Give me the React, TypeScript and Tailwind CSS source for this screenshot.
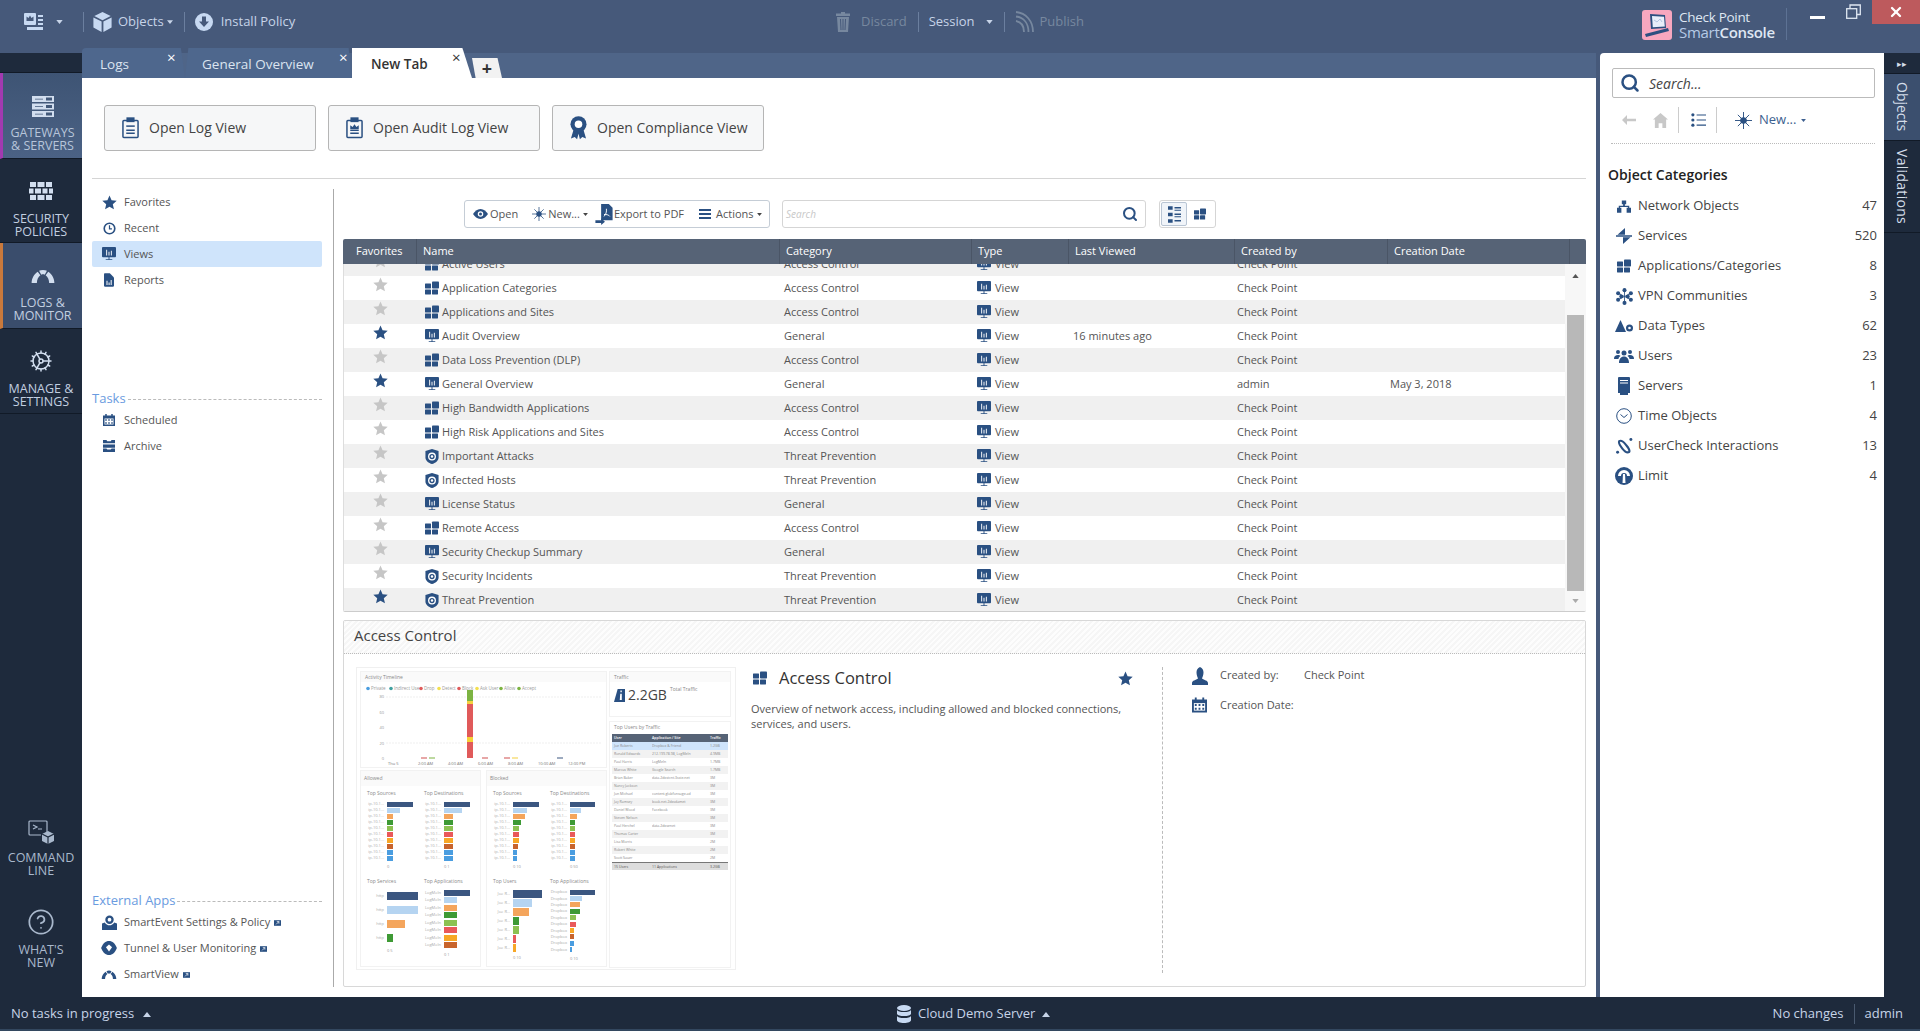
import { Search, Cog, CircleHelp, X } from "lucide-react";

type IconProps = { className?: string };

// hand drawn glyphs, all use currentColor
function Star({ className }: IconProps) {
  return (
    <svg viewBox="0 0 24 24" className={className} fill="currentColor">
      <path d="M12 .8l3.3 7.6 8.2.8-6.2 5.5 1.8 8.1L12 18.600l-7.100 4.200 1.800-8.100L.5 9.200l8.200-.8z" />
    </svg>
  );
}

function Caret({ className }: IconProps) {
  return (
    <svg viewBox="0 0 8 5" className={className} fill="currentColor">
      <path d="M0 0h8L4 5z" />
    </svg>
  );
}

function CaretUp({ className }: IconProps) {
  return (
    <svg viewBox="0 0 8 5" className={className} fill="currentColor">
      <path d="M0 5h8L4 0z" />
    </svg>
  );
}

function AppsIcon({ className }: IconProps) {
  return (
    <svg viewBox="0 0 14 14" className={className} fill="currentColor">
      <rect x="0" y="2.500" width="6" height="5" rx="0.400" />
      <rect x="7" y="0.500" width="7" height="7" rx="0.800" />
      <rect x="0" y="8.500" width="6" height="5" rx="0.400" />
      <rect x="7" y="8.500" width="6" height="5" rx="0.400" />
    </svg>
  );
}

function ViewIcon({ className }: IconProps) {
  return (
    <svg viewBox="0 0 15 15" className={className} fill="currentColor">
      <path d="M1 0h13a1 1 0 011 1v9a1 1 0 01-1 1H8v2h3v1H4v-1h3v-2H1a1 1 0 01-1-1V1a1 1 0 011-1z" />
      <path d="M4.500 3h1v6h-1zM7 5h1v4H7zM9.500 4h1v5h-1z" fill="#fff" />
    </svg>
  );
}

function ShieldIcon({ className }: IconProps) {
  return (
    <svg viewBox="0 0 14 16" className={className} fill="currentColor">
      <path d="M7 0l7 2v7c0 3.500-3.500 6-7 7-3.500-1-7-3.500-7-7V2z" />
      <circle cx="7" cy="8" r="4.200" fill="#fff" />
      <circle cx="7" cy="8" r="2.800" />
      <circle cx="7" cy="8" r="1.300" fill="#fff" />
    </svg>
  );
}

function ClipIcon({ className, crown }: IconProps & { crown?: boolean }) {
  return (
    <svg viewBox="0 0 18 22" className={className} fill="none" stroke="currentColor" strokeWidth="1.600">
      <rect x="1" y="3" width="16" height="18" rx="1" />
      <rect x="5.500" y="0.500" width="7" height="3.500" fill="currentColor" />
      {crown ? (
        <path d="M4.500 8l2.500 2 2-3 2 3 2.500-2v4h-9z" fill="currentColor" stroke="none" />
      ) : (
        <path d="M4.500 9h9" />
      )}
      <path d="M4.500 13.500h9M4.500 16.500h9" />
    </svg>
  );
}

function RibbonIcon({ className }: IconProps) {
  return (
    <svg viewBox="0 0 18 26" className={className} fill="currentColor">
      <path d="M4 14l-3 10 4-1.500L7.500 25 9 19l1.500 6 2.500-2.500 4 1.500-3-10z" />
      <circle cx="9" cy="9" r="8.500" />
      <circle cx="9" cy="9" r="4" fill="#fff" />
    </svg>
  );
}

function ClockIcon({ className }: IconProps) {
  return (
    <svg viewBox="0 0 16 16" className={className} fill="none" stroke="currentColor" strokeWidth="2">
      <circle cx="8" cy="8" r="6.500" />
      <path d="M8 4v4.500h3" strokeWidth="1.500" />
    </svg>
  );
}

function ReportIcon({ className }: IconProps) {
  return (
    <svg viewBox="0 0 12 16" className={className} fill="currentColor">
      <path d="M0 1a1 1 0 011-1h6l5 5v10a1 1 0 01-1 1H1a1 1 0 01-1-1z" />
      <path d="M3 9h1.200v5H3zM5.500 11h1.200v3H5.500zM8 8h1.200v6H8z" fill="#fff" />
    </svg>
  );
}

function CalendarIcon({ className }: IconProps) {
  return (
    <svg viewBox="0 0 16 16" className={className} fill="currentColor">
      <path d="M3 0h2v2h6V0h2v2h3v14H0V2h3z" />
      <path d="M2 6h12v8H2z" fill="#fff" />
      <path d="M3 7h2v2H3zM7 7h2v2H7zM11 7h2v2h-2zM3 11h2v2H3zM7 11h2v2H7zM11 11h2v2h-2z" />
    </svg>
  );
}

function ArchiveIcon({ className }: IconProps) {
  return (
    <svg viewBox="0 0 14 14" className={className} fill="currentColor">
      <path d="M0 0h4l1 1.500h4L10 0h4v4H0zM0 5h14v4H0zM0 10h4l1 1h4l1-1h4v4H0z" />
      <path d="M0 4h14v1H0z" fill="#fff" />
    </svg>
  );
}

function SmartEventIcon({ className }: IconProps) {
  return (
    <svg viewBox="0 0 16 16" className={className} fill="currentColor">
      <path d="M0 9l3-1c1 2 3 3 5 3s4-1 5-3l3 1v7H0z" />
      <circle cx="8" cy="5" r="4.500" />
      <circle cx="8" cy="5" r="2" fill="#fff" />
    </svg>
  );
}

function TunnelIcon({ className }: IconProps) {
  return (
    <svg viewBox="0 0 18 16" className={className} fill="currentColor">
      <path d="M9 0c4 0 7 3 9 8-2 5-5 8-9 8s-7-3-9-8c2-5 5-8 9-8z" />
      <path d="M9 4l3.500 3L9 12 5.500 7z" fill="#fff" />
    </svg>
  );
}

function GaugeIcon({ className }: IconProps) {
  return (
    <svg viewBox="0 0 26 16" className={className} fill="currentColor">
      <path d="M0 16C0 11 2.500 6 7 3l3 4c-2.500 2-4 5-4 9zM8.500 2c1.300-.6 2.800-1 4.500-1v0c1.700 0 3.200.4 4.500 1l-2.500 4.500C14.400 6.200 13.700 6 13 6s-1.400.2-2 .5zM19 3c4.500 3 7 8 7 13h-6c0-4-1.500-7-4-9z" />
    </svg>
  );
}

function ExternalIcon({ className }: IconProps) {
  return (
    <svg viewBox="0 0 10 8" className={className}>
      <rect width="10" height="8" fill="currentColor" />
      <path d="M3 6l4-4M4 2h3v3" stroke="#fff" strokeWidth="1" fill="none" />
    </svg>
  );
}

function Spark({ className }: IconProps) {
  return (
    <svg viewBox="0 0 18 18" className={className} stroke="currentColor" strokeWidth="1" fill="currentColor">
      <path d="M9 0v18M0 9h18M3 3l12 12M15 3L3 15" />
      <circle cx="9" cy="9" r="3.500" stroke="none" />
    </svg>
  );
}

function EyeIcon({ className }: IconProps) {
  return (
    <svg viewBox="0 0 18 12" className={className} fill="currentColor">
      <path d="M9 0c4 0 7 3 9 6-2 3-5 6-9 6s-7-3-9-6c2-3 5-6 9-6z" />
      <circle cx="9" cy="6" r="3.300" fill="#fff" />
      <circle cx="9" cy="6" r="1.800" />
    </svg>
  );
}

function PdfIcon({ className }: IconProps) {
  return (
    <svg viewBox="0 0 18 22" className={className} fill="currentColor">
      <path d="M6 0h8l4 4v13H6z" />
      <path d="M9 13c2-2 3-5 2.500-8M9 11c2 0 5 0 6 2" stroke="#fff" fill="none" />
      <path d="M0 17h6v-2l4 3.500-4 3.500v-2H0z" />
    </svg>
  );
}

function BarsIcon({ className }: IconProps) {
  return (
    <svg viewBox="0 0 12 10" className={className} fill="currentColor">
      <path d="M0 0h12v2H0zM0 4h12v2H0zM0 8h12v2H0z" />
    </svg>
  );
}

function DetailsIcon({ className }: IconProps) {
  return (
    <svg viewBox="0 0 14 18" className={className} fill="currentColor">
      <path d="M0 0h5v4H0zM0 7h5v4H0zM0 14h5v4H0zM7 1h7v1.500H7zM7 8h7v1.500H7zM7 15h7v1.500H7zM7 4h7v1H7zM7 11h7v1H7z" />
    </svg>
  );
}

function ListDots({ className }: IconProps) {
  return (
    <svg viewBox="0 0 16 16" className={className} fill="currentColor">
      <circle cx="2" cy="2.500" r="1.700" />
      <circle cx="2" cy="8" r="1.700" />
      <circle cx="2" cy="13.500" r="1.700" />
      <path d="M6 2h10v1.200H6zM6 7.400h10v1.200H6zM6 12.800h10V14H6z" />
    </svg>
  );
}

function House({ className }: IconProps) {
  return (
    <svg viewBox="0 0 16 16" className={className} fill="currentColor">
      <path d="M8 0l8 7h-2v9h-4v-5H6v5H2V7H0z" />
    </svg>
  );
}

function BackArrow({ className }: IconProps) {
  return (
    <svg viewBox="0 0 14 10" className={className} fill="currentColor">
      <path d="M5 0v3.800h9v2.400H5V10L0 5z" />
    </svg>
  );
}

function PersonIcon({ className }: IconProps) {
  return (
    <svg viewBox="0 0 16 18" className={className} fill="currentColor">
      <path d="M8 0c2.500 1 3.500 3 3.500 5.500S10.500 10 10 11.500c2 1.500 6 2 6 4.500v2H0v-2c0-2.500 4-3 6-4.500C5.500 10 4.500 8 4.500 5.500S5.500 1 8 0z" />
    </svg>
  );
}

function ServerStack({ className }: IconProps) {
  return (
    <svg viewBox="0 0 22 21" className={className} fill="currentColor">
      <path d="M0 0h22v6H0zM0 7.500h22v6H0zM0 15h22v6H0z" />
      <path d="M14 1.500h6v3h-6zM14 9h6v3h-6zM14 16.500h6v3h-6z" fill="#425879" />
      <path d="M3 2.700h8v.8H3zM3 10.200h8v.8H3zM3 17.700h8v.8H3z" fill="#425879" />
    </svg>
  );
}

function Bricks({ className }: IconProps) {
  return (
    <svg viewBox="0 0 24 18" className={className} fill="currentColor">
      <path d="M1 0h6v5H1zM8.500 0h7v5h-7zM17 0h6v5h-6zM0 6.500h4.500v5H0zM6 6.500h6v5H6zM13.500 6.500h5v5h-5zM20 6.500h4v5h-4zM1 13h6v5H1zM8.500 13h7v5h-7zM17 13h6v5h-6z" />
    </svg>
  );
}

function ConsoleIcon({ className }: IconProps) {
  return (
    <svg viewBox="0 0 26 24" className={className} fill="none" stroke="currentColor" strokeWidth="1.200">
      <path d="M19 15V2a1 1 0 00-1-1H2a1 1 0 00-1 1v12a1 1 0 001 1h11" />
      <path d="M5 5l4 2-4 2M10 9h4" />
      <path d="M20 11l6 3v7l-6 3-6-3v-7z" fill="currentColor" stroke="none" />
      <path d="M14 14l6 3 6-3M20 17v7" stroke="#1e2a3c" />
    </svg>
  );
}

function DeskIcon({ className }: IconProps) {
  return (
    <svg viewBox="0 0 20 18" className={className} fill="currentColor">
      <rect x="0" y="0" width="12" height="12" rx="1" />
      <path d="M2.500 8V3.500l2 1.500L6 2.500 7.500 5l2-1.500V8z" fill="#46597a" />
      <path d="M14 2h5v2h-5zM14 6h5v2h-5zM14 10h5v2h-5zM3 14h16v3H3z" />
    </svg>
  );
}

function CubeIcon({ className }: IconProps) {
  return (
    <svg viewBox="0 0 20 22" className={className} fill="currentColor">
      <path d="M10 0l9 4.500-9 4.500-9-4.500z" />
      <path d="M0 6l9 4.500V22l-9-5zM20 6l-9 4.500V22l9-5z" />
    </svg>
  );
}

function InstallIcon({ className }: IconProps) {
  return (
    <svg viewBox="0 0 18 18" className={className}>
      <circle cx="9" cy="9" r="9" fill="currentColor" />
      <path d="M7 3.500h4v5h3L9 14 4 8.500h3z" fill="#46597a" />
    </svg>
  );
}

function TrashIcon({ className }: IconProps) {
  return (
    <svg viewBox="0 0 14 20" className={className} fill="currentColor">
      <path d="M5 0h4v1.500h5V4H0V1.500h5z" />
      <path d="M1 5h12l-1 15H2zM4 7l.500 11h1L5 7zM6.500 7v11h1V7zM9 7l-.500 11h1L10 7z" fillRule="evenodd" />
    </svg>
  );
}

function PublishIcon({ className }: IconProps) {
  return (
    <svg viewBox="0 0 20 22" className={className} fill="none" stroke="currentColor" strokeWidth="1.800">
      <path d="M1 10c5 1 8 5 8 11M1 5.500c8 1 12.500 7 12.500 15.500M1 1c10 1 17 9 17 20" />
    </svg>
  );
}

function DbIcon({ className }: IconProps) {
  return (
    <svg viewBox="0 0 14 18" className={className} fill="currentColor">
      <ellipse cx="7" cy="3" rx="7" ry="3" />
      <path d="M0 5c1 1.500 3 2 7 2s6-.5 7-2v4c-1 1.500-3 2-7 2S1 10.500 0 9zM0 11c1 1.500 3 2 7 2s6-.5 7-2v4c0 2-3 3-7 3s-7-1-7-3z" />
    </svg>
  );
}

function LogoIcon({ className }: IconProps) {
  return (
    <svg viewBox="0 0 30 30" className={className}>
      <rect width="30" height="30" rx="3" fill="#f7a7bf" />
      <path d="M8 4l15 1 1 13-15 1z" fill="#2c4f80" />
      <path d="M10 6l12 .800.800 9.700-12 .800z" fill="#e8eefa" />
      <path d="M3 24l23-6 1 3-23 6z" fill="#2c4f80" />
      <path d="M12 10l3 2 3-3 2 3" stroke="#9db4d6" fill="none" strokeWidth="0.700" />
    </svg>
  );
}

function NetworkIcon({ className }: IconProps) {
  return (
    <svg viewBox="0 0 16 14" className={className} fill="currentColor">
      <path d="M5.500 0h5v4.500H9V6h5v2.500h2V14h-5V8.500h1.500v-1h-9v1H5V14H0V8.500h2V6h5V4.500H5.500z" />
    </svg>
  );
}

function ServicesIcon({ className }: IconProps) {
  return (
    <svg viewBox="0 0 16 16" className={className} fill="currentColor">
      <path d="M9 0v6.700H1.500zM0 7.200h16v1.600H0zM7 16V9.300h7.500z" />
    </svg>
  );
}

function VpnIcon({ className }: IconProps) {
  return (
    <svg viewBox="0 0 16 16" className={className} fill="currentColor">
      {[[8, 2], [8, 14], [2, 5], [14, 5], [2, 11], [14, 11], [5, 8], [11, 8]].map(([x, y]) => (
        <circle key={`${x}-${y}`} cx={x} cy={y} r="1.900" />
      ))}
      <path d="M8 2v12M2 5l12 6M14 5L2 11" stroke="currentColor" strokeWidth="0.800" />
    </svg>
  );
}

function DataTypesIcon({ className }: IconProps) {
  return (
    <svg viewBox="0 0 18 12" className={className} fill="currentColor">
      <path d="M5.500 0L11 12H0z" />
      <circle cx="14.500" cy="8" r="3.500" />
      <circle cx="14.500" cy="8" r="1.300" fill="#fff" />
    </svg>
  );
}

function UsersIcon({ className }: IconProps) {
  return (
    <svg viewBox="0 0 20 14" className={className} fill="currentColor">
      <circle cx="4" cy="3" r="2" />
      <circle cx="16" cy="3" r="2" />
      <circle cx="10" cy="4" r="2.500" />
      <path d="M0 10c0-3 1.500-4 4-4 1 0 2 .3 2.500 1C5 8 4.500 9 4.500 10zM20 10c0-3-1.500-4-4-4-1 0-2 .3-2.500 1 1.500 1 2 2 2 3zM5 14c0-4 2-6.500 5-6.500s5 2.500 5 6.500z" />
    </svg>
  );
}

function ServerIcon({ className }: IconProps) {
  return (
    <svg viewBox="0 0 12 18" className={className} fill="currentColor">
      <path d="M1 0h10a1 1 0 011 1v15H10v2H2v-2H0V1a1 1 0 011-1z" />
      <path d="M2 3h8v1H2zM2 5.500h8v1H2z" fill="#fff" />
    </svg>
  );
}

function TimeIcon({ className }: IconProps) {
  return (
    <svg viewBox="0 0 16 16" className={className} fill="none" stroke="currentColor" strokeWidth="1">
      <circle cx="8" cy="8" r="7.300" />
      <path d="M4.500 6.500L8 9.500l3.500-3" />
    </svg>
  );
}

function UserCheckIcon({ className }: IconProps) {
  return (
    <svg viewBox="0 0 16 16" className={className} fill="none" stroke="currentColor" strokeWidth="2">
      <path d="M3 3c2-1.500 4 .5 6 3s4.500 5 3.500 7c-2 1.500-4.500-.5-6.500-3S2 5 3 3z" />
      <circle cx="14" cy="1.500" r="1.400" fill="currentColor" stroke="none" />
      <circle cx="1.500" cy="13.500" r="1.400" fill="currentColor" stroke="none" />
    </svg>
  );
}

function LimitIcon({ className }: IconProps) {
  return (
    <svg viewBox="0 0 18 18" className={className}>
      <circle cx="9" cy="9" r="9" fill="currentColor" />
      <path d="M3 9a6 6 0 0112 0h-3a3 3 0 00-6 0z" fill="#fff" />
      <path d="M8 7h2l.500 9h-3z" fill="#fff" />
    </svg>
  );
}

function TrafficIcon({ className }: IconProps) {
  return (
    <svg viewBox="0 0 12 14" className={className}>
      <path d="M4 0h8v14H0z" fill="currentColor" />
      <path d="M7 1.500h1.500v2H7zM6.800 5h1.700v7H6.300z" fill="#fff" />
    </svg>
  );
}

type NameKind = "apps" | "view" | "shield";

const rows: { name: string; kind: NameKind; category: string; fav?: boolean; viewed?: string; by?: string; date?: string }[] = [
  { name: "Active Users", kind: "apps", category: "Access Control" },
  { name: "Application Categories", kind: "apps", category: "Access Control" },
  { name: "Applications and Sites", kind: "apps", category: "Access Control" },
  { name: "Audit Overview", kind: "view", category: "General", fav: true, viewed: "16 minutes ago" },
  { name: "Data Loss Prevention (DLP)", kind: "apps", category: "Access Control" },
  { name: "General Overview", kind: "view", category: "General", fav: true, by: "admin", date: "May 3, 2018" },
  { name: "High Bandwidth Applications", kind: "apps", category: "Access Control" },
  { name: "High Risk Applications and Sites", kind: "apps", category: "Access Control" },
  { name: "Important Attacks", kind: "shield", category: "Threat Prevention" },
  { name: "Infected Hosts", kind: "shield", category: "Threat Prevention" },
  { name: "License Status", kind: "view", category: "General" },
  { name: "Remote Access", kind: "apps", category: "Access Control" },
  { name: "Security Checkup Summary", kind: "view", category: "General" },
  { name: "Security Incidents", kind: "shield", category: "Threat Prevention" },
  { name: "Threat Prevention", kind: "shield", category: "Threat Prevention", fav: true },
];

const categories = [
  { label: "Network Objects", count: 47, Icon: NetworkIcon, size: "h-[13px] w-[14px]" },
  { label: "Services", count: 520, Icon: ServicesIcon, size: "h-[16px] w-[16px]" },
  { label: "Applications/Categories", count: 8, Icon: AppsIcon, size: "h-[14px] w-[14px]" },
  { label: "VPN Communities", count: 3, Icon: VpnIcon, size: "h-[17px] w-[17px]" },
  { label: "Data Types", count: 62, Icon: DataTypesIcon, size: "h-[12px] w-[18px]" },
  { label: "Users", count: 23, Icon: UsersIcon, size: "h-[14px] w-[20px]" },
  { label: "Servers", count: 1, Icon: ServerIcon, size: "h-[18px] w-[12px]" },
  { label: "Time Objects", count: 4, Icon: TimeIcon, size: "h-[16px] w-[16px]" },
  { label: "UserCheck Interactions", count: 13, Icon: UserCheckIcon, size: "h-[17px] w-[17px]" },
  { label: "Limit", count: 4, Icon: LimitIcon, size: "h-[18px] w-[18px]" },
];

const palette = ["#3b5680", "#b5d4f1", "#f4a55c", "#3e9a35", "#8cc152", "#e9595a", "#f7a726", "#c8642c", "#4a9de0", "#4a9de0"];

function NavItem(props: { label: React.ReactNode; icon: React.ReactNode; h: string; pt: string; gap: string; tone: "orange" | "purple" | "dark" }) {
  const base = "flex flex-col items-center border-b border-[#111a27] text-[12.500px] leading-[13px] text-center";
  const tones = {
    purple: "bg-[linear-gradient(#3e5474,#4b6285)] border-l-[3px] border-l-[#a23ab0] text-[#b7c5da]",
    orange: "bg-[#3a4d6c] border-l-[3px] border-l-[#c9793c] text-[#c2cfe0]",
    dark: "text-[#c2cfe0]",
  };
  return (
    <div className={`${base} ${tones[props.tone]} ${props.h} ${props.pt}`}>
      {props.icon}
      <div className={`${props.gap} whitespace-nowrap`}>{props.label}</div>
    </div>
  );
}

function SideLink({ icon, label, active, ext }: { icon: React.ReactNode; label: string; active?: boolean; ext?: boolean }) {
  return (
    <div className={`flex h-[26px] items-center rounded-[2px] pl-[9px] text-[11px] text-[#555] ${active ? "bg-[#cfe4fb]" : ""}`}>
      <span className="flex w-[16px] justify-center text-[#2a5082]">{icon}</span>
      <span className="ml-[7px]">{label}</span>
      {ext && <ExternalIcon className="ml-[4px] mt-[2px] h-[6px] w-[7px] text-[#2a5082]" />}
    </div>
  );
}

function SectionLabel({ label }: { label: string }) {
  return (
    <div className="flex h-[16px] items-center text-[13px] text-[#6a9be0]">
      <span>{label}</span>
      <span className="ml-[2px] flex-1 border-t border-dashed border-[#bbb]" />
    </div>
  );
}

function MiniChart(props: { title: string; rows: { label: string; w: number }[]; barH: string; rowH: string; axis?: string }) {
  return (
    <div className="w-[57px] shrink-0 text-[5px] leading-[6px] text-[#888]">
      <div className="h-[11px] pl-[6px]">{props.title}</div>
      {props.rows.map((r, i) => (
        <div key={`${r.label}${i}`} className={`flex items-center ${props.rowH}`}>
          <span className="w-[26px] shrink-0 overflow-hidden whitespace-nowrap pr-[3px] text-right text-[4px] text-[#aaa]">{r.label}</span>
          <span className={props.barH} style={{ width: r.w, backgroundColor: palette[i] }} />
        </div>
      ))}
      {props.axis && <div className="mt-[3px] pl-[26px] text-[4px] text-[#999]">{props.axis}</div>}
    </div>
  );
}

const toRows = (prefix: string, widths: number[]) => widths.map((w) => ({ label: prefix, w }));

function ChartGroup({ title, charts }: { title: string; charts: React.ReactNode[] }) {
  return (
    <div className="h-[197px] w-[121px] border border-[#f2f2f2] bg-white">
      <div className="h-[15px] bg-[#fafafa] pl-[3px] text-[5px] leading-[14px] text-[#888]">{title}</div>
      <div className="mt-[4px] flex">{charts[0]}{charts[1]}</div>
      <div className="mt-[8px] flex">{charts[2]}{charts[3]}</div>
    </div>
  );
}

function Timeline() {
  const segs = [
    [690, 11, "#7cb342"], [701, 3, "#f4d03f"], [704, 33, "#e05a5a"], [737, 5, "#f7d134"], [742, 16, "#e05a5a"],
  ] as const;
  const legend = [
    ["Private", 367, "#4a9de0"], ["Indirect Use", 390, "#3fa0a0"], ["Drop", 420, "#e05a5a"], ["Detect", 438, "#f4e04f"],
    ["Block", 458, "#e05a5a"], ["Ask User", 476, "#f4e04f"], ["Allow", 500, "#7cb342"], ["Accept", 518, "#7cb342"],
  ] as const;
  return (
    <svg viewBox="360 682 247 86" className="h-[86px] w-[247px]">
      {legend.map(([t, x, c]) => (
        <g key={t}>
          <circle cx={x} cy={688.500} r="1.800" fill={c} />
          <text x={x + 3} y={690} fontSize="4.500" fill="#999">{t}</text>
        </g>
      ))}
      {[697, 743].map((y) => (
        <line key={y} x1="385" x2="600" y1={y} y2={y} stroke="#ddd" strokeWidth="0.500" strokeDasharray="2 1" />
      ))}
      {["80", "60", "40", "20", "0"].map((t, i) => (
        <text key={t} x="383" y={698 + i * 15.500} fontSize="4" fill="#999" textAnchor="end">{t}</text>
      ))}
      {segs.map(([y, h, c]) => (
        <rect key={y} x="466" y={y} width="6" height={h} fill={c} />
      ))}
      <rect x="420" y="757.500" width="6" height="1" fill="#d05050" />
      <rect x="428" y="757.500" width="6" height="1" fill="#7cb342" />
      <rect x="481" y="757.500" width="6" height="1" fill="#d05050" />
      <rect x="503" y="757.500" width="6" height="1" fill="#d05050" />
      <rect x="511" y="757.500" width="6" height="1" fill="#f4d03f" />
      <rect x="556" y="757.500" width="6" height="1" fill="#3b5680" />
      {["Thu 5", "2:00 AM", "4:00 AM", "6:00 AM", "8:00 AM", "10:00 AM", "12:00 PM"].map((t, i) => (
        <text key={t} x={387 + i * 30} y="765" fontSize="4" fill="#777">{t}</text>
      ))}
    </svg>
  );
}

const topUsers = [
  ["Joe Roberts", "Dropbox & Friend", "1.2GB"],
  ["Ronald Edwards", "212.199.78.98, LogMeIn", "4.9MB"],
  ["Paul Harris", "LogMeIn", "1.7MB"],
  ["Marcus White", "Google Search", "1.7MB"],
  ["Brian Baker", "data.2dxstcnt.3sxie.net", "3M"],
  ["Nancy Jackson", "", "3M"],
  ["Jon Michael", "content.globfonsuge.ad", "3M"],
  ["Jay Ramsey", "book.net.2dxsdamet", "3M"],
  ["Daniel Wood", "Facebook", "3M"],
  ["Steven Nelson", "", "3M"],
  ["Paul Herchel", "data.2dxsenet", "3M"],
  ["Thomas Carter", "", "3M"],
  ["Lisa Morris", "", "2M"],
  ["Robert White", "", "2M"],
  ["Scott Sauer", "", "2M"],
];

function Thumbnail() {
  const allowed = [
    <MiniChart key="a" title="Top Sources" barH="h-[5px]" rowH="h-[6px]" rows={toRows("ip-10.1...", [26, 13, 6, 6, 6, 6, 6, 6, 6, 6])} axis="0" />,
    <MiniChart key="b" title="Top Destinations" barH="h-[5px]" rowH="h-[6px]" rows={toRows("ip-10.1...", [26, 18, 9, 9, 9, 9, 9, 9, 9, 9])} axis="0   1" />,
    <MiniChart key="c" title="Top Services" barH="h-[8px]" rowH="h-[14px]" rows={toRows("http", [31, 31, 18, 6])} axis="0   5" />,
    <MiniChart key="d" title="Top Applications" barH="h-[6px]" rowH="h-[7.500px]" rows={toRows("LogMeIn", [26, 13, 13, 13, 13, 13, 13, 13])} axis="0   1" />,
  ];
  const blocked = [
    <MiniChart key="a" title="Top Sources" barH="h-[5px]" rowH="h-[6px]" rows={toRows("ip-10.1...", [26, 14, 12, 8, 6, 6, 6, 5, 4, 4])} axis="0   10" />,
    <MiniChart key="b" title="Top Destinations" barH="h-[5px]" rowH="h-[6px]" rows={toRows("ip-10.1...", [25, 11, 7, 5, 5, 5, 5, 5, 5, 5])} axis="0   50" />,
    <MiniChart key="c" title="Top Users" barH="h-[8px]" rowH="h-[9px]" rows={toRows("Joe R...", [29, 19, 16, 6, 6, 3, 3])} axis="0   10" />,
    <MiniChart key="d" title="Top Applications" barH="h-[5px]" rowH="h-[6.400px]" rows={toRows("Dropbox", [25, 12, 10, 10, 6, 6, 4, 4, 4, 2])} axis="0   10" />,
  ];
  return (
    <div className="flex h-[303px] w-[380px] shrink-0 gap-[2px] border border-[#f0f0f0] p-[3px]">
      <div className="w-[247px] shrink-0">
        <div className="h-[97px] border border-[#f2f2f2]">
          <div className="h-[10px] bg-[#fafafa] pl-[4px] text-[5px] leading-[10px] text-[#888]">Activity Timeline</div>
          <Timeline />
        </div>
        <div className="mt-[2px] flex gap-[5px]">
          <ChartGroup title="Allowed" charts={allowed} />
          <ChartGroup title="Blocked" charts={blocked} />
        </div>
      </div>
      <div className="w-[122px] shrink-0">
        <div className="h-[46px] border border-[#f2f2f2]">
          <div className="h-[10px] bg-[#fafafa] pl-[4px] text-[5px] leading-[10px] text-[#888]">Traffic</div>
          <div className="mt-[4px] flex items-start pl-[4px]">
            <TrafficIcon className="mt-[3px] h-[13px] w-[11px] text-[#2a5082]" />
            <span className="ml-[3px] text-[14px] leading-[18px] text-[#444]">2.2GB</span>
            <span className="ml-[3px] text-[5px] text-[#888]">Total Traffic</span>
          </div>
        </div>
        <div className="mt-[4px] h-[247px] border border-[#f2f2f2]">
          <div className="h-[11px] pl-[4px] text-[5px] leading-[11px] text-[#888]">Top Users by Traffic</div>
          <div className="mx-[2px] mt-[1px] flex h-[8px] bg-[#566376] text-[3.500px] font-semibold leading-[8px] text-white">
            <span className="w-[40px] pl-[2px]">User</span>
            <span className="w-[58px]">Application / Site</span>
            <span>Traffic</span>
          </div>
          {topUsers.map((u, i) => (
            <div key={u[0]} className={`mx-[2px] flex h-[8px] text-[3.500px] leading-[8px] text-[#888] ${i === 0 ? "bg-[#cfe4fb]" : i % 2 ? "bg-[#f2f2f2]" : ""}`}>
              <span className="w-[40px] pl-[2px]">{u[0]}</span>
              <span className="w-[58px] overflow-hidden whitespace-nowrap">{u[1]}</span>
              <span>{u[2]}</span>
            </div>
          ))}
          <div className="mx-[2px] flex h-[8px] border-t border-[#777] bg-[#ddd] text-[3.500px] leading-[7px] text-[#555]">
            <span className="w-[40px] pl-[2px]">15 Users</span>
            <span className="w-[58px]">11 Applications</span>
            <span>3.2GB</span>
          </div>
        </div>
      </div>
    </div>
  );
}

const gridCols = "grid grid-cols-[74px_363px_192px_97px_166px_153px_1fr]";

function App() {
  return (
    <div className="flex h-[1031px] w-[1920px] flex-col overflow-hidden bg-[#46597a] text-[13px] [font-family:'Open_Sans',sans-serif]">
      {/* title bar */}
      <div className="flex h-[53px] shrink-0 items-start bg-[#46597a] text-[13px] text-[#c7d4e8]">
        <div className="flex h-[44px] w-[836px] shrink-0 items-center pl-[24px]">
          <DeskIcon className="h-[18px] w-[20px] text-[#c7d9f2]" />
          <Caret className="ml-[12px] h-[4px] w-[7px]" />
          <span className="ml-[20px] h-[20px] border-l border-[#6b7f9f]" />
          <CubeIcon className="ml-[9px] h-[20px] w-[19px] text-[#c7d9f2]" />
          <span className="ml-[6px]">Objects</span>
          <Caret className="ml-[3px] h-[4px] w-[6px]" />
          <span className="ml-[11px] h-[20px] border-l border-[#6b7f9f]" />
          <InstallIcon className="ml-[10px] h-[18px] w-[18px] text-[#c7d9f2]" />
          <span className="ml-[8px]">Install Policy</span>
        </div>
        <div className="flex h-[44px] flex-1 items-center">
          <TrashIcon className="h-[20px] w-[14px] text-[#77889f]" />
          <span className="ml-[11px] text-[#77889f]">Discard</span>
          <span className="ml-[11px] h-[20px] border-l border-[#6b7f9f]" />
          <span className="ml-[10px]">Session</span>
          <Caret className="ml-[11px] h-[4px] w-[7px]" />
          <span className="ml-[11px] h-[20px] border-l border-[#6b7f9f]" />
          <PublishIcon className="ml-[10px] h-[22px] w-[20px] text-[#77889f]" />
          <span className="ml-[5px] text-[#77889f]">Publish</span>
        </div>
        <div className="flex w-[290px] shrink-0 items-start">
          <LogoIcon className="ml-[12px] mt-[10px] h-[30px] w-[30px] shrink-0" />
          <div className="ml-[7px] mt-[10px] w-[92px] shrink-0 whitespace-nowrap tracking-[-0.3px] text-[#dfe7f2]">
            <div className="text-[13.500px] leading-[15px]">Check Point</div>
            <div className="text-[15px] leading-[15px] text-[#b7cbe6]">
              Smart<span className="font-semibold text-[#dfe7f2]">Console</span>
            </div>
          </div>
          <span className="ml-[15px] mt-[8px] h-[32px] shrink-0 border-l border-[#5d7294]" />
          <span className="ml-[23px] mt-[16px] h-[3px] w-[15px] shrink-0 bg-white" />
          <svg viewBox="0 0 15 15" className="ml-[21px] mt-[4px] h-[15px] w-[15px] shrink-0 text-[#dfe7f2]" fill="none" stroke="currentColor" strokeWidth="1.300">
            <rect x="0.700" y="4.700" width="10" height="9.600" />
            <path d="M4 4.500V1h10.300v9.500H11" />
          </svg>
          <div className="ml-[11px] flex h-[24px] w-[48px] shrink-0 items-center justify-center bg-[#bd5a5d]">
            <X className="h-[16px] w-[16px] text-white" strokeWidth={3.500} />
          </div>
        </div>
      </div>

      {/* main area */}
      <div className="flex min-h-0 flex-1">
        {/* left nav */}
        <div className="flex w-[82px] shrink-0 flex-col bg-[#1e2a3c]">
          <div className="h-[20px] border-b border-[#111a27]" />
          <NavItem tone="purple" h="h-[86px]" pt="pt-[23px]" gap="mt-[9px]" label={<>GATEWAYS<br />& SERVERS</>} icon={<ServerStack className="h-[21px] w-[22px] text-[#d2deef]" />} />
          <NavItem tone="dark" h="h-[84px]" pt="pt-[23px]" gap="mt-[12px]" label={<>SECURITY<br />POLICIES</>} icon={<Bricks className="h-[18px] w-[24px] text-[#d2deef]" />} />
          <NavItem tone="orange" h="h-[86px]" pt="pt-[26px]" gap="mt-[13px]" label={<>LOGS &<br />MONITOR</>} icon={<GaugeIcon className="h-[14px] w-[26px] text-[#d2deef]" />} />
          <NavItem tone="dark" h="h-[85px]" pt="pt-[20px]" gap="mt-[9px]" label={<>MANAGE &<br />SETTINGS</>} icon={<Cog className="h-[24px] w-[24px] text-[#d2deef]" strokeWidth={1.500} />} />
          <div className="mt-auto flex flex-col items-center pb-[28px] text-center text-[12.500px] leading-[13px] text-[#a9b8cc]">
            <ConsoleIcon className="h-[24px] w-[26px] text-[#a9b8cc]" />
            <div className="mt-[7px]">COMMAND<br />LINE</div>
            <CircleHelp className="mt-[31px] h-[28px] w-[28px]" strokeWidth={1.500} />
            <div className="mt-[7px]">WHAT'S<br />NEW</div>
          </div>
        </div>

        {/* center */}
        <div className="flex w-[1514px] shrink-0 flex-col">
          <div className="flex h-[25px] shrink-0 items-end bg-[#4f6588]">
            <div className="-mt-[5px] flex h-[30px] items-stretch self-end text-[13.500px]">
              <div className="relative flex w-[103px] items-center rounded-tl-[4px] bg-[#4e678d] pl-[18px] pt-[3px] text-[#dbe4f0] [clip-path:polygon(0_0,96%_0,100%_100%,0_100%)]">
                Logs
                <span className="absolute left-[85px] top-[1px] text-[15px] leading-[16px] text-white">×</span>
              </div>
              <div className="relative flex w-[167px] items-center bg-[#4e678d] pl-[17px] pt-[3px] text-[#dbe4f0] [clip-path:polygon(2%_0,98%_0,100%_100%,0_100%)]">
                General Overview
                <span className="absolute left-[154px] top-[1px] text-[15px] leading-[16px] text-white">×</span>
              </div>
              <div className="relative flex w-[120px] items-center bg-white pl-[19px] pt-[3px] font-semibold text-[#333] [clip-path:polygon(0_0,92%_0,100%_100%,0_100%)]">
                New Tab
                <span className="absolute left-[100px] top-[1px] text-[15px] font-normal leading-[16px] text-[#333]">×</span>
              </div>
              <div className="mt-[10px] flex h-[20px] w-[30px] items-center justify-center bg-[#f2f2f2] text-[18px] font-bold leading-none text-[#333] [clip-path:polygon(0_0,85%_0,100%_100%,12%_100%)]">
                +
              </div>
            </div>
          </div>

          <div className="flex min-h-0 flex-1 flex-col bg-white pl-[10px] pr-[10px]">
            {/* quick open buttons */}
            <div className="flex h-[101px] shrink-0 gap-[12px] border-b border-[#d5d5d5] pl-[12px] pt-[27px]">
              {[
                { label: "Open Log View", icon: <ClipIcon className="h-[22px] w-[17px] text-[#2a5082]" /> },
                { label: "Open Audit Log View", icon: <ClipIcon crown className="h-[22px] w-[17px] text-[#2a5082]" /> },
                { label: "Open Compliance View", icon: <RibbonIcon className="h-[26px] w-[17px] text-[#2a5082]" /> },
              ].map((b) => (
                <div key={b.label} className="flex h-[46px] w-[212px] items-center rounded-[3px] border border-[#b5b5b5] bg-[#f6f7f8] pb-[1px] pl-[17px] text-[14px] text-[#444]">
                  {b.icon}
                  <span className="ml-[10px]">{b.label}</span>
                </div>
              ))}
            </div>

            <div className="mb-[10px] mt-[10px] flex min-h-0 flex-1">
              {/* side list */}
              <div className="flex w-[242px] shrink-0 flex-col border-r border-[#aaa] pr-[11px]">
                <SideLink icon={<Star className="h-[15px] w-[15px]" />} label="Favorites" />
                <SideLink icon={<ClockIcon className="h-[13px] w-[13px]" />} label="Recent" />
                <SideLink active icon={<ViewIcon className="h-[14px] w-[14px]" />} label="Views" />
                <SideLink icon={<ReportIcon className="h-[14px] w-[10px]" />} label="Reports" />
                <div className="mt-[98px]">
                  <SectionLabel label="Tasks" />
                </div>
                <SideLink icon={<CalendarIcon className="h-[12px] w-[12px]" />} label="Scheduled" />
                <SideLink icon={<ArchiveIcon className="h-[12px] w-[12px]" />} label="Archive" />
                <div className="mt-auto">
                  <SectionLabel label="External Apps" />
                </div>
                <SideLink ext icon={<SmartEventIcon className="h-[15px] w-[15px]" />} label="SmartEvent Settings & Policy" />
                <SideLink ext icon={<TunnelIcon className="h-[14px] w-[16px]" />} label="Tunnel & User Monitoring" />
                <SideLink ext icon={<GaugeIcon className="h-[9px] w-[16px]" />} label="SmartView" />
              </div>

              <div className="flex min-w-0 flex-1 flex-col pl-[9px] pt-[11px]">
                {/* toolbar */}
                <div className="flex h-[28px] shrink-0 items-stretch pl-[121px]">
                  <div className="flex w-[306px] items-center rounded-[3px] border border-[#c5cdd6] pl-[8px] text-[11px] text-[#555]">
                    <EyeIcon className="h-[10px] w-[15px] text-[#2a5082]" />
                    <span className="ml-[2px]">Open</span>
                    <Spark className="ml-[14px] h-[14px] w-[14px] text-[#2a5082]" />
                    <span className="ml-[2px]">New...</span>
                    <Caret className="ml-[3px] h-[3px] w-[5px] text-[#444]" />
                    <PdfIcon className="ml-[7px] h-[21px] w-[18px] text-[#2a5082]" />
                    <span className="ml-[1px]">Export to PDF</span>
                    <BarsIcon className="ml-[15px] h-[10px] w-[12px] text-[#2a5082]" />
                    <span className="ml-[5px]">Actions</span>
                    <Caret className="ml-[3px] h-[3px] w-[5px] text-[#444]" />
                  </div>
                  <div className="ml-[12px] flex w-[364px] items-center rounded-[3px] border border-[#d5d5d5] pl-[3px] pr-[7px] text-[10px] italic text-[#c8c8c8]">
                    <span className="flex-1">Search</span>
                    <Search className="h-[16px] w-[16px] text-[#2a5082]" strokeWidth={3} />
                  </div>
                  <div className="ml-[13px] flex w-[57px] items-center rounded-[3px] border border-[#d5d5d5] pl-[1px]">
                    <span className="flex h-[24px] w-[26px] items-center justify-center rounded-[2px] border border-[#b9c5d4] bg-[#f0f4f9]">
                      <DetailsIcon className="h-[17px] w-[13px] text-[#2a5082]" />
                    </span>
                    <AppsIcon className="ml-[7px] h-[12px] w-[12px] text-[#2a5082]" />
                  </div>
                </div>

                {/* views table */}
                <div className="mt-[11px] h-[373px] shrink-0 overflow-hidden rounded-[2px] border-b border-[#ccc]">
                  <div className="flex h-[25px] items-center bg-[#566376] text-[11px] text-white">
                    <div className="grid w-[1227px] grid-cols-[74px_363px_192px_97px_166px_153px_182px]">
                      {["Favorites", "Name", "Category", "Type", "Last Viewed", "Created by", "Creation Date"].map((h, i) => (
                        <div key={h} className={`flex h-[25px] items-center border-r border-[#4a5566] ${i === 0 ? "pl-[13px]" : "pl-[6px]"}`}>
                          {h}
                        </div>
                      ))}
                    </div>
                  </div>
                  <div className="flex h-[347px] overflow-hidden border-l border-[#ddd]">
                    <div className="-mt-[12px] min-w-0 flex-1 text-[11px] text-[#555]">
                      {rows.map((r, i) => (
                        <div key={r.name} className={`${gridCols} h-[24px] items-center ${i % 2 ? "bg-white" : "bg-[#f0f0f0]"}`}>
                          <div className="flex justify-center pb-[7px] pr-[1px]">
                            <Star className={`h-[15px] w-[15px] ${r.fav ? "text-[#2a5082]" : "text-[#c6c6c6]"}`} />
                          </div>
                          <div className="flex items-center pl-[7px]">
                            {r.kind === "apps" && <AppsIcon className="h-[14px] w-[14px] text-[#2a5082]" />}
                            {r.kind === "view" && <ViewIcon className="h-[14px] w-[14px] text-[#2a5082]" />}
                            {r.kind === "shield" && <ShieldIcon className="h-[15px] w-[14px] text-[#2a5082]" />}
                            <span className="ml-[3px]">{r.name}</span>
                          </div>
                          <div className="pl-[3px]">{r.category}</div>
                          <div className="flex items-center pl-[4px]">
                            <ViewIcon className="h-[14px] w-[14px] text-[#2a5082]" />
                            <span className="ml-[4px]">View</span>
                          </div>
                          <div className="pl-[3px]">{r.viewed}</div>
                          <div className="pl-[1px]">{r.by ?? "Check Point"}</div>
                          <div className="pl-[1px]">{r.date}</div>
                        </div>
                      ))}
                    </div>
                    <div className="flex w-[21px] shrink-0 flex-col items-center bg-[#f7f7f7] pt-[10px]">
                      <CaretUp className="h-[4px] w-[7px] text-[#555]" />
                      <div className="mt-[37px] h-[276px] w-[17px] bg-[#b8b8b8]" />
                      <Caret className="mt-[8px] h-[4px] w-[7px] text-[#aaa]" />
                    </div>
                  </div>
                </div>

                {/* preview */}
                <div className="mt-[8px] flex min-h-0 flex-1 flex-col rounded-[2px] border border-[#d8d8d8]">
                  <div className="flex h-[33px] shrink-0 items-center border-b border-dotted border-[#bbb] bg-[repeating-linear-gradient(135deg,#f6f6f6_0px,#f6f6f6_2px,#fdfdfd_2px,#fdfdfd_4px)] pb-[4px] pl-[10px] text-[15px] text-[#444]">
                    Access Control
                  </div>
                  <div className="flex flex-1 pl-[12px] pt-[13px]">
                    <Thumbnail />
                    <div className="ml-[15px] h-[306px] w-[412px] border-r border-dashed border-[#bbb] pr-[29px]">
                      <div className="flex items-center pl-[2px]">
                        <AppsIcon className="h-[14px] w-[14px] text-[#2a5082]" />
                        <span className="ml-[12px] flex-1 text-[16.500px] leading-[22px] text-[#333]">Access Control</span>
                        <Star className="h-[15px] w-[15px] text-[#2a5082]" />
                      </div>
                      <p className="mt-[12px] pr-[3px] text-[11px] leading-[15px] text-[#555]">
                        Overview of network access, including allowed and blocked connections, services, and users.
                      </p>
                    </div>
                    <div className="pl-[29px] text-[11px] text-[#555]">
                      <div className="flex h-[30px] items-start">
                        <PersonIcon className="h-[18px] w-[16px] text-[#2a5082]" />
                        <span className="ml-[12px] w-[84px]">Created by:</span>
                        <span>Check Point</span>
                      </div>
                      <div className="flex items-start">
                        <CalendarIcon className="h-[16px] w-[15px] text-[#2a5082]" />
                        <span className="ml-[13px]">Creation Date:</span>
                      </div>
                    </div>
                  </div>
                </div>
              </div>
            </div>
          </div>
        </div>

        {/* objects panel */}
        <div className="ml-[4px] flex w-[284px] shrink-0 flex-col rounded-tl-[4px] bg-white pl-[8px] pr-[7px] pt-[15px]">
          <div className="ml-[4px] mr-[2px] flex h-[30px] shrink-0 items-center rounded-[2px] border border-[#bbb] pl-[7px] text-[14px] italic text-[#444]">
            <Search className="h-[20px] w-[20px] text-[#2a5082]" strokeWidth={3} />
            <span className="ml-[9px]">Search...</span>
          </div>
          <div className="mt-[9px] flex h-[26px] shrink-0 items-center pl-[14px] text-[13px] text-[#3d5f8f]">
            <BackArrow className="h-[10px] w-[14px] text-[#c8c8c8]" />
            <House className="ml-[17px] h-[15px] w-[15px] text-[#c8c8c8]" />
            <span className="ml-[10px] h-[26px] border-l border-[#ccc]" />
            <ListDots className="ml-[12px] h-[16px] w-[15px] text-[#2a5082]" />
            <span className="ml-[10px] h-[26px] border-l border-[#ccc]" />
            <Spark className="ml-[18px] h-[17px] w-[17px] text-[#2a5082]" />
            <span className="ml-[7px]">New...</span>
            <Caret className="ml-[5px] h-[3px] w-[5px]" />
          </div>
          <div className="ml-[3px] mr-[2px] mt-[10px] shrink-0 border-t border-dotted border-[#bbb]" />
          <div className="mt-[21px] shrink-0 text-[14px] font-semibold leading-[20px] text-[#222]">Object Categories</div>
          <div className="mt-[6px]">
            {categories.map(({ label, count, Icon, size }) => (
              <div key={label} className="flex h-[30px] items-center text-[13px] text-[#444]">
                <span className="flex w-[30px] shrink-0 justify-center pl-[2px] text-[#2a5082]">
                  <Icon className={size} />
                </span>
                <span className="flex-1">{label}</span>
                <span>{count}</span>
              </div>
            ))}
          </div>
        </div>

        {/* right rail */}
        <div className="flex w-[36px] shrink-0 flex-col bg-[#1e2a3c] text-[14px] text-[#d4dde9]">
          <div className="flex h-[21px] items-center justify-center border-b border-[#111a27] text-[9px] leading-none">▸▸</div>
          <div className="flex h-[67px] items-center justify-center border-b border-[#111a27] bg-[#3b4f6e] [writing-mode:vertical-rl]">Objects</div>
          <div className="flex h-[92px] items-center justify-center border-b border-[#111a27] tracking-[0.3px] [writing-mode:vertical-rl]">Validations</div>
        </div>
      </div>

      {/* status bar */}
      <div className="flex h-[34px] shrink-0 items-center border-b-2 border-[#33475f] bg-[#1e2a3c] pt-[2px] text-[13px] text-[#c7d4e8]">
        <div className="flex w-[897px] shrink-0 items-center pl-[11px]">
          <span>No tasks in progress</span>
          <CaretUp className="ml-[9px] h-[5px] w-[8px]" />
        </div>
        <DbIcon className="h-[18px] w-[14px] text-[#c7d9f2]" />
        <span className="ml-[7px]">Cloud Demo Server</span>
        <CaretUp className="ml-[7px] h-[5px] w-[8px]" />
        <span className="ml-auto">No changes</span>
        <span className="ml-[10px] h-[20px] border-l border-[#4a5a70]" />
        <span className="ml-[10px] mr-[17px]">admin</span>
      </div>
    </div>
  );
}

export default App;
